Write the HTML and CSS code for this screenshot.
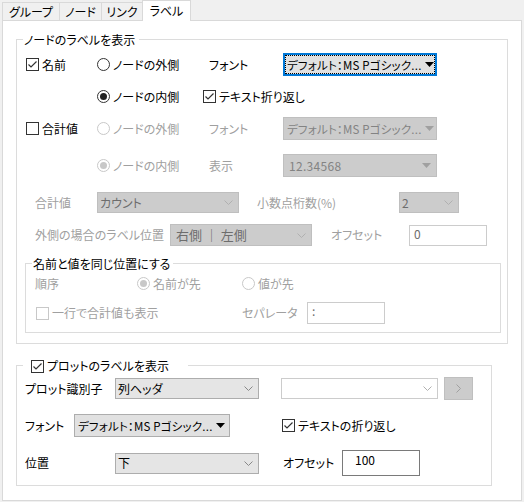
FILE: index.html
```html
<!DOCTYPE html>
<html lang="ja">
<head>
<meta charset="utf-8">
<title>ラベル</title>
<link rel="stylesheet" href="styles.css">
</head>
<body>
<div class="tabs">
  <div class="tab t1">グループ</div>
  <div class="tab t2">ノード</div>
  <div class="tab t3">リンク</div>
  <div class="tab t4 active">ラベル</div>
</div>
<div class="panel">
  <div class="group g1">
    <div class="legend l1"><span>ノードのラベルを表示</span></div>

    <div class="row r1">
      <div class="c w-chk"><svg class="ico" viewBox="0 0 13 13"><rect x="0.5" y="0.5" width="12" height="12" fill="#fff" stroke="#333"/><polyline points="2.5,6.5 5,9 10.5,3.5" fill="none" stroke="#333" stroke-width="1.2"/></svg><span>名前</span></div>
      <div class="c w-rad"><svg class="ico" viewBox="0 0 13 13"><circle cx="6.5" cy="6.5" r="6" fill="#fff" stroke="#333"/></svg><span>ノードの外側</span></div>
      <div class="c w-lbl"><span class="pl6">フォント</span></div>
      <div class="fontbtn focus w-fb"><div class="fin"><span class="ft">デフォルト：MS Pゴシック...</span><svg class="tri" viewBox="0 0 9 5"><polygon points="0,0 9,0 4.5,5" fill="#000"/></svg></div></div>
    </div>

    <div class="row r2">
      <div class="c w-chk"></div>
      <div class="c w-rad"><svg class="ico" viewBox="0 0 13 13"><circle cx="6.5" cy="6.5" r="6" fill="#fff" stroke="#333"/><circle cx="6.5" cy="6.5" r="3.5" fill="#222"/></svg><span>ノードの内側</span></div>
      <div class="c"><svg class="ico" viewBox="0 0 13 13"><rect x="0.5" y="0.5" width="12" height="12" fill="#fff" stroke="#333"/><polyline points="2.5,6.5 5,9 10.5,3.5" fill="none" stroke="#333" stroke-width="1.2"/></svg><span>テキスト折り返し</span></div>
    </div>

    <div class="row r3">
      <div class="c w-chk"><svg class="ico" viewBox="0 0 13 13"><rect x="0.5" y="0.5" width="12" height="12" fill="#fff" stroke="#333"/></svg><span>合計値</span></div>
      <div class="c w-rad dis"><svg class="ico" viewBox="0 0 13 13"><circle cx="6.5" cy="6.5" r="6" fill="#fff" stroke="#c8c8c8"/></svg><span>ノードの外側</span></div>
      <div class="c w-lbl dis"><span class="pl6">フォント</span></div>
      <div class="fontbtn disb w-fb"><div class="fin"><span class="ft">デフォルト：MS Pゴシック...</span><svg class="tri" viewBox="0 0 9 5"><polygon points="0,0 9,0 4.5,5" fill="#a0a0a0"/></svg></div></div>
    </div>

    <div class="row r4">
      <div class="c w-chk"></div>
      <div class="c w-rad dis"><svg class="ico" viewBox="0 0 13 13"><circle cx="6.5" cy="6.5" r="6" fill="#fff" stroke="#c8c8c8"/><circle cx="6.5" cy="6.5" r="3.5" fill="#c8c8c8"/></svg><span>ノードの内側</span></div>
      <div class="c w-lbl dis"><span class="pl6">表示</span></div>
      <div class="fontbtn disb w-fb"><div class="fin"><span class="num">12.34568</span><svg class="tri" viewBox="0 0 9 5"><polygon points="0,0 9,0 4.5,5" fill="#a0a0a0"/></svg></div></div>
    </div>

    <div class="row r5">
      <div class="c w-l5 dis">合計値</div>
      <div class="dd ddis w-cnt"><span>カウント</span><svg class="chev" viewBox="0 0 9 5"><polyline points="0.5,0.5 4.5,4.5 8.5,0.5" fill="none" stroke="#b0b0b0"/></svg></div>
      <div class="c w-l5b dis">小数点桁数(%)</div>
      <div class="dd ddis w-two"><span>2</span><svg class="chev" viewBox="0 0 9 5"><polyline points="0.5,0.5 4.5,4.5 8.5,0.5" fill="none" stroke="#b0b0b0"/></svg></div>
    </div>

    <div class="row r6">
      <div class="c w-l6 dis">外側の場合のラベル位置</div>
      <div class="dd ddis w-pos"><span class="big">右側 ｜ 左側</span><svg class="chev" viewBox="0 0 9 5"><polyline points="0.5,0.5 4.5,4.5 8.5,0.5" fill="none" stroke="#b0b0b0"/></svg></div>
      <div class="c w-l6b dis">オフセット</div>
      <div class="tb tdis w-tb6">0</div>
    </div>

    <div class="group g3">
      <div class="legend l3"><span>名前と値を同じ位置にする</span></div>
      <div class="row r7">
        <div class="c w-l7 dis">順序</div>
        <div class="c w-r7 dis"><svg class="ico" viewBox="0 0 13 13"><circle cx="6.5" cy="6.5" r="6" fill="#fff" stroke="#c8c8c8"/><circle cx="6.5" cy="6.5" r="3.5" fill="#c8c8c8"/></svg><span>名前が先</span></div>
        <div class="c dis"><svg class="ico" viewBox="0 0 13 13"><circle cx="6.5" cy="6.5" r="6" fill="#fff" stroke="#c8c8c8"/></svg><span>値が先</span></div>
      </div>
      <div class="row r8">
        <div class="c w-c8 dis"><svg class="ico" viewBox="0 0 13 13"><rect x="0.5" y="0.5" width="12" height="12" fill="#fff" stroke="#c8c8c8"/></svg><span>一行で合計値も表示</span></div>
        <div class="c w-l8 dis">セパレータ</div>
        <div class="tb tdis w-tb8">:</div>
      </div>
    </div>
  </div>

  <div class="group g2">
    <div class="legend l2"><span class="c"><svg class="ico" viewBox="0 0 13 13"><rect x="0.5" y="0.5" width="12" height="12" fill="#fff" stroke="#333"/><polyline points="2.5,6.5 5,9 10.5,3.5" fill="none" stroke="#333" stroke-width="1.2"/></svg><span>プロットのラベルを表示</span></span></div>

    <div class="row ra">
      <div class="c w-la">プロット識別子</div>
      <div class="dd den w-col"><span>列ヘッダ</span><svg class="chev" viewBox="0 0 9 5"><polyline points="0.5,0.5 4.5,4.5 8.5,0.5" fill="none" stroke="#888"/></svg></div>
      <div class="dd dwhite w-emp"><span></span><svg class="chev" viewBox="0 0 9 5"><polyline points="0.5,0.5 4.5,4.5 8.5,0.5" fill="none" stroke="#b0b0b0"/></svg></div>
      <div class="navbtn"><svg class="gt" viewBox="0 0 5 9"><polyline points="0.5,0.5 4.5,4.5 0.5,8.5" fill="none" stroke="#a0a0a0"/></svg></div>
    </div>

    <div class="row rb">
      <div class="c w-lb">フォント</div>
      <div class="fontbtn enb w-fb2"><div class="fin"><span class="ft">デフォルト：MS Pゴシック...</span><svg class="tri" viewBox="0 0 9 5"><polygon points="0,0 9,0 4.5,5" fill="#000"/></svg></div></div>
      <div class="c cb2"><svg class="ico" viewBox="0 0 13 13"><rect x="0.5" y="0.5" width="12" height="12" fill="#fff" stroke="#333"/><polyline points="2.5,6.5 5,9 10.5,3.5" fill="none" stroke="#333" stroke-width="1.2"/></svg><span>テキストの折り返し</span></div>
    </div>

    <div class="row rc">
      <div class="c w-lc">位置</div>
      <div class="dd den w-col"><span>下</span><svg class="chev" viewBox="0 0 9 5"><polyline points="0.5,0.5 4.5,4.5 8.5,0.5" fill="none" stroke="#888"/></svg></div>
      <div class="c w-lc2">オフセット</div>
      <div class="tb ten w-tbc">100</div>
    </div>
  </div>
</div>
</body>
</html>
```

FILE: styles.css
```css
html, body {
  margin: 0;
  padding: 0;
}
body {
  width: 524px;
  height: 502px;
  overflow: hidden;
  background: #f0f0f0;
  color: #000;
  font-family: "Noto Sans CJK JP", "Noto Sans", sans-serif;
  font-size: 12px;
  line-height: 14px;
  font-feature-settings: "palt" 1;
}

/* tabs */
.tabs {
  display: flex;
  align-items: flex-end;
  height: 20px;
  padding-left: 3px;
}
.tab {
  box-sizing: border-box;
  height: 18px;
  margin-left: -1px;
  border: 1px solid #d9d9d9;
  border-bottom: none;
  background: #f0f0f0;
  line-height: 17px;
  text-align: center;
  white-space: nowrap;
}
.t1 { width: 58px; }
.t2 { width: 43px; }
.t3 { width: 42px; }
.t4 { width: 49px; }
.tab.active {
  position: relative;
  height: 21px;
  margin-bottom: -1px;
  background: #fff;
  line-height: 19px;
}

.panel {
  box-sizing: border-box;
  width: 520px;
  height: 481px;
  margin-left: 2px;
  border: 1px solid #d9d9d9;
  background: #fff;
  overflow: hidden;
}

/* group boxes */
.group {
  box-sizing: border-box;
  border: 1px solid #dcdcdc;
  display: flex;
  flex-direction: column;
}
.g1 {
  width: 492px;
  height: 305px;
  margin: 18px 0 0 13px;
}
.g2 {
  width: 476px;
  height: 121px;
  margin: 21px 0 0 13px;
}
.g3 {
  width: 476px;
  height: 70px;
  margin: 17px 0 0 8px;
}
.legend {
  display: flex;
  height: 14px;
  margin-top: -7px;
}
.legend > span {
  background: #fff;
  white-space: nowrap;
}
.l1 > span {
  margin-left: 6px;
  padding: 0 4px 0 1px;
}
.l3 > span {
  margin-left: 6px;
  padding: 0 3px 0 1px;
}
.l2 > span {
  box-sizing: border-box;
  width: 165px;
  margin-left: 6px;
  padding-left: 8px;
}

/* rows */
.row {
  display: flex;
  align-items: center;
  flex: none;
}
.r1 { height: 23px; margin-top: 6px; padding-left: 9px; }
.r2 { height: 23px; margin-top: 9px; padding-left: 9px; }
.r3 { height: 23px; margin-top: 9px; padding-left: 9px; }
.r4 { height: 23px; margin-top: 14px; padding-left: 9px; }
.r5 { height: 23px; margin-top: 14px; padding-left: 18px; }
.r6 { height: 22px; margin-top: 10px; padding-left: 18px; }
.r7 { height: 21px; margin-top: 2px; padding-left: 9px; }
.r8 { height: 22px; margin-top: 8px; padding-left: 10px; }
.ra { height: 23px; margin-top: 4px; padding-left: 8px; }
.rb { height: 23px; margin-top: 14px; padding-left: 8px; }
.rc { height: 26px; margin-top: 13px; padding-left: 8px; }

.c {
  display: flex;
  align-items: center;
  flex: none;
  white-space: nowrap;
}
.ico {
  width: 13px;
  height: 13px;
  flex: none;
  margin-right: 3px;
}
.dis { color: #a0a0a0; }
.pl6 { padding-left: 6px; }

/* column widths */
.w-chk { width: 71px; }
.w-rad { width: 106px; }
.w-lbl { width: 80px; }
.w-fb { width: 154px; height: 23px; }
.w-l5 { width: 62px; }
.w-cnt { width: 142px; height: 21px; }
.w-l5b { width: 142px; margin-left: 18px; }
.w-two { width: 60px; height: 21px; }
.w-l6 { width: 135px; }
.w-pos { width: 142px; height: 22px; }
.w-l6b { width: 78px; margin-left: 19px; }
.w-tb6 { width: 78px; height: 21px; }
.w-l7 { width: 102px; }
.w-r7 { width: 105px; }
.w-c8 { width: 206px; }
.w-l8 { width: 65px; }
.w-tb8 { width: 78px; height: 22px; }
.w-la { width: 90px; }
.w-col { width: 144px; height: 21px; }
.w-emp { width: 157px; height: 21px; margin-left: 22px; }
.w-lb { width: 49px; }
.w-fb2 { width: 156px; height: 23px; }
.cb2 { margin-left: 52px; }
.w-lc { width: 90px; }
.w-lc2 { width: 59px; margin-left: 24px; }
.w-tbc { width: 78px; height: 26px; }

/* font buttons */
.fontbtn {
  box-sizing: border-box;
  flex: none;
  border: 1px solid #adadad;
  background: #e1e1e1;
  padding: 1px;
}
.fontbtn.focus {
  border: 2px solid #0078d7;
  padding: 0;
}
.fontbtn.disb {
  border-color: #bfbfbf;
  background: #cccccc;
  color: #838383;
}
.fin {
  box-sizing: border-box;
  height: 100%;
  display: flex;
  align-items: center;
  justify-content: space-between;
  padding: 0 3px 0 1px;
  border: 1px solid transparent;
}
.focus .fin {
  border: 1px dotted #000;
}
.ft {
  white-space: nowrap;
  font-size: 11.5px;
  letter-spacing: 0.2px;
}
.num {
  white-space: nowrap;
  letter-spacing: 0.3px;
  padding-left: 2px;
}
.tri {
  width: 9px;
  height: 5px;
  flex: none;
  margin-left: 3px;
}

/* dropdowns */
.dd {
  box-sizing: border-box;
  flex: none;
  display: flex;
  align-items: center;
  justify-content: space-between;
  border: 1px solid #adadad;
  padding: 0 5px 0 2px;
  white-space: nowrap;
}
.den {
  background: #e5e5e5;
  border-color: #adadad;
}
.ddis {
  background: #cccccc;
  border-color: #bfbfbf;
  color: #6d6d6d;
}
.dwhite {
  background: #fff;
  border-color: #cccccc;
}
.big { font-size: 13px; padding-left: 3px; }
.chev {
  width: 9px;
  height: 5px;
  flex: none;
}

/* text boxes */
.tb {
  box-sizing: border-box;
  flex: none;
  border: 1px solid #7a7a7a;
  background: #fff;
  padding: 1px 0 0 4px;
  line-height: 14px;
}
.tdis {
  border-color: #cccccc;
  color: #6d6d6d;
}
.ten { padding-top: 2px; padding-left: 12px; }

/* nav button */
.navbtn {
  box-sizing: border-box;
  flex: none;
  width: 29px;
  height: 23px;
  margin-left: 6px;
  border: 1px solid #bfbfbf;
  background: #cccccc;
  display: flex;
  align-items: center;
  justify-content: center;
}
.gt {
  width: 5px;
  height: 9px;
}
```
